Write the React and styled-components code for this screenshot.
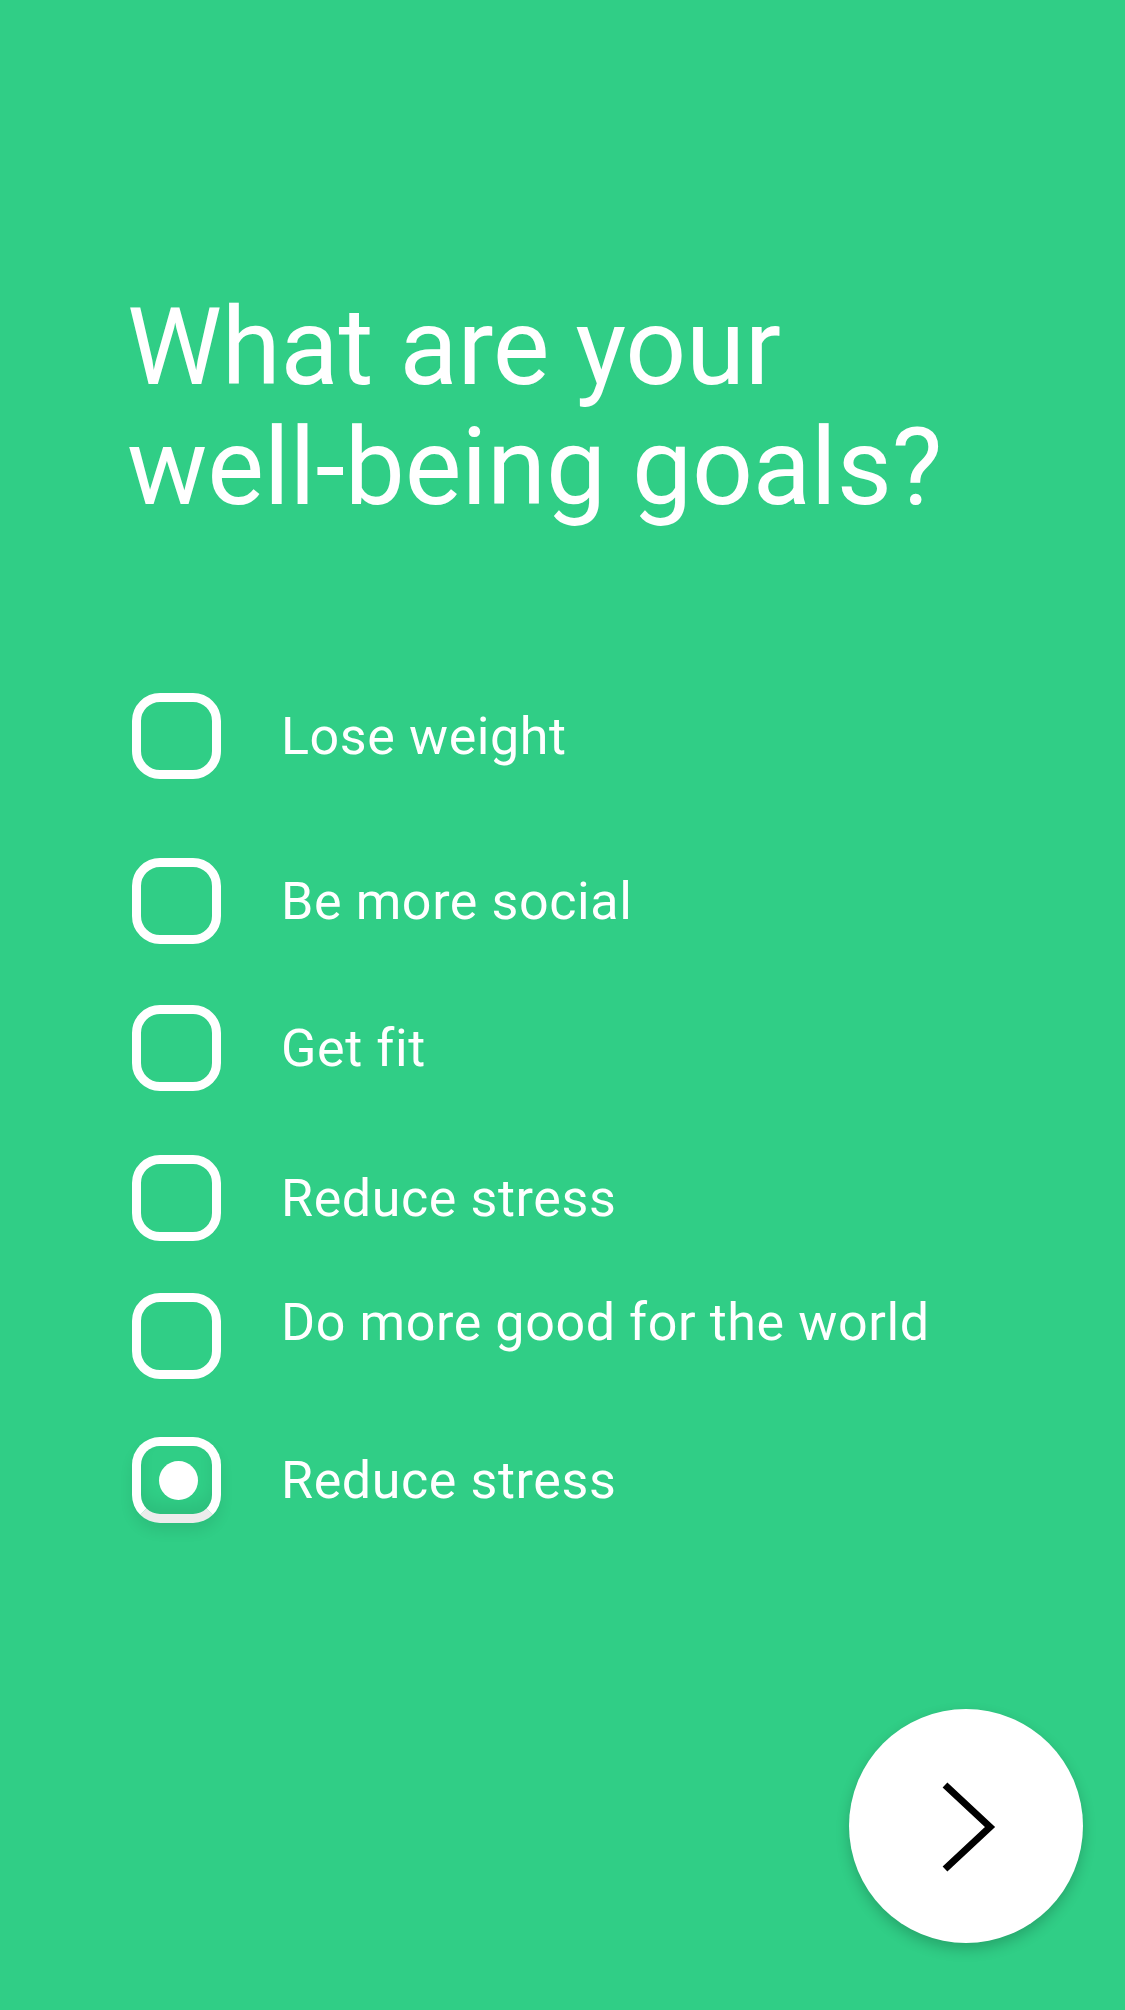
import React, { useState } from 'react';
import styled, { createGlobalStyle } from 'styled-components';

const GlobalStyle = createGlobalStyle`
    html, body {
        margin: 0;
        padding: 0;
        background: #30ce86;
    }
    body {
        font-family: Roboto, "Noto Sans", sans-serif;
        -webkit-font-smoothing: antialiased;
    }
`;

const Screen = styled.div`
    width: 1125px;
    height: 2010px;
    background: #30ce86;
    display: flex;
    flex-direction: column;
    box-sizing: border-box;
    padding: 288px 42px 0 127px;
`;

const Title = styled.h1`
    margin: 0;
    font-size: 107px;
    line-height: 120px;
    font-weight: 400;
    letter-spacing: -0.2px;
    color: #fff;
`;

const GoalList = styled.ul`
    list-style: none;
    margin: 165px 0 0 5px;
    padding: 0;
    display: flex;
    flex-direction: column;
`;

const GoalRow = styled.li`
    display: flex;
    align-items: center;
    gap: 60px;
    height: 86px;
    margin-top: ${p => p.$space}px;
    cursor: pointer;
`;

const Box = styled.span`
    flex: none;
    width: 89px;
    height: 86px;
    box-sizing: border-box;
    border: 9px solid #fff;
    border-radius: 28px;
    display: flex;
    align-items: center;
    justify-content: center;
    ${p => p.$checked && `
        border-bottom-color: #ececec;
        box-shadow: 0 8px 14px rgba(0, 0, 0, 0.08), inset 0 -10px 14px rgba(0, 0, 0, 0.07);
    `}
`;

const Dot = styled.span`
    width: 39px;
    height: 39px;
    border-radius: 50%;
    background: #fff;
    margin-left: 3px;
`;

const Label = styled.span`
    font-size: 52px;
    letter-spacing: 0.6px;
    color: #fff;
    margin-bottom: ${p => (p.$raise ? p.$raise * 2 : 0)}px;
`;

const NextButton = styled.button`
    align-self: flex-end;
    margin-top: auto;
    margin-bottom: 67px;
    width: 234px;
    height: 234px;
    border: none;
    border-radius: 50%;
    background: #fff;
    box-shadow: 0 6px 14px rgba(0, 0, 0, 0.2);
    display: flex;
    align-items: center;
    justify-content: center;
    padding: 0;
    cursor: pointer;
`;

const goals = [
    { label: 'Lose weight', space: 0 },
    { label: 'Be more social', space: 79 },
    { label: 'Get fit', space: 61 },
    { label: 'Reduce stress', space: 64 },
    { label: 'Do more good for the world', space: 52, raise: 14 },
    { label: 'Reduce stress', space: 58 },
];

export default function App() {
    const [checked, setChecked] = useState([5]);

    const toggle = (i) =>
        setChecked(c => (c.includes(i) ? c.filter(x => x !== i) : [...c, i]));

    return (
        <>
            <GlobalStyle />
            <Screen>
                <Title>What are your<br />well-being goals?</Title>
                <GoalList>
                    {goals.map((g, i) => {
                        const on = checked.includes(i);
                        return (
                            <GoalRow key={i} $space={g.space} onClick={() => toggle(i)}>
                                <Box $checked={on}>{on && <Dot />}</Box>
                                <Label $raise={g.raise}>{g.label}</Label>
                            </GoalRow>
                        );
                    })}
                </GoalList>
                <NextButton aria-label="Next">
                    <svg width="234" height="234" viewBox="0 0 234 234">
                        <path d="M96 76 L141 118 L96 160" fill="none" stroke="#000" strokeWidth="7" />
                    </svg>
                </NextButton>
            </Screen>
        </>
    );
}
